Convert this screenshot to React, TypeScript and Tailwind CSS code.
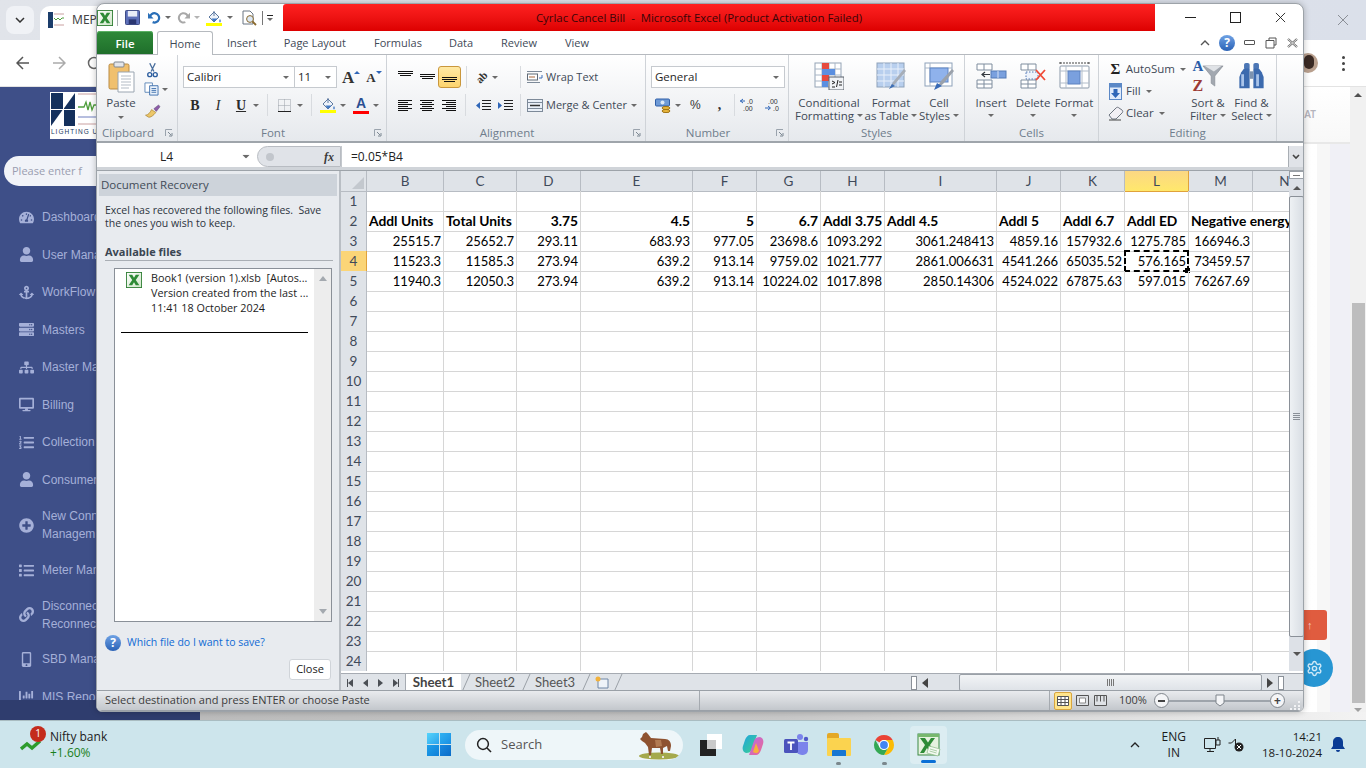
import type { ReactNode } from "react";
import clsx from "clsx";
import { Settings } from "lucide-react";
import {
  FaAnchor,
  FaChartBar,
  FaDesktop,
  FaLink,
  FaList,
  FaListOl,
  FaMobileAlt,
  FaPlusCircle,
  FaServer,
  FaSitemap,
  FaTachometerAlt,
  FaUser,
} from "react-icons/fa";

const calibri = "[font-family:Lato,sans-serif]";

const Caret = ({ className }: { className?: string }) => (
  <svg viewBox="0 0 6 3" className={clsx("h-[3px] w-[6px] shrink-0", className)}>
    <path d="M0 0h6L3 3z" fill="#6a6a6a" />
  </svg>
);

const ExcelLogo = ({ className }: { className?: string }) => (
  <svg viewBox="0 0 18 18" className={className}>
    <defs>
      <linearGradient id="xl" x1="0" y1="0" x2="1" y2="1">
        <stop offset="0" stopColor="#ffffff" />
        <stop offset="1" stopColor="#cfe6c8" />
      </linearGradient>
    </defs>
    <rect x="0.5" y="0.5" width="17" height="17" fill="url(#xl)" stroke="#2d7d32" />
    <path d="M3 3h4l2 3.4L11 3h4l-4 6 4 6h-4l-2-3.4L7 15H3l4-6z" fill="#2e8b36" />
  </svg>
);

const ExcelTaskIcon = () => (
  <svg viewBox="0 0 24 24" className="h-[24px] w-[24px]">
    <rect x="1" y="1" width="21" height="21" fill="#e6f2df" stroke="#3d8a45" />
    <rect x="1" y="1" width="21" height="3" fill="#78b86e" />
    <path d="M3 5h5l3 4.5L14 5h4l-5 7 5 8h-5l-3-5-3 5H3l5-8z" fill="#2e8b36" />
    <path d="M12 13l11 3-2 7-11-3z" fill="#f5faf2" stroke="#8dbb87" strokeWidth="0.7" />
    <path d="M13 16l7 2M12.5 18l7 2" stroke="#8dbb87" strokeWidth="0.7" />
  </svg>
);

const Launcher = () => (
  <svg viewBox="0 0 8 8" className="absolute right-[4px] top-[6px] h-[8px] w-[8px]">
    <path d="M0.5 7V0.5H7" fill="none" stroke="#9aa3ad" />
    <path d="M3 3l3 3M7 4v3H4" fill="none" stroke="#7d8893" />
  </svg>
);

function Group({ label, className, launcher, children }: { label: string; className: string; launcher?: boolean; children: ReactNode }) {
  return (
    <div className={clsx("flex h-full shrink-0 flex-col border-r border-[#cfd3d8]", className)}>
      <div className="min-h-0 flex-1">{children}</div>
      <div className={clsx("relative flex h-[18px] items-center justify-center pt-[2px] text-[11.5px] text-[#6f7d8c]", launcher && "pr-[18px]")}>
        {label}
        {launcher && <Launcher />}
      </div>
    </div>
  );
}

function BigButton({ className, icon, lines, caret }: { className: string; icon: ReactNode; lines: string[]; caret?: boolean }) {
  return (
    <div className={clsx("flex shrink-0 flex-col items-center pt-[7px] text-[11.5px] leading-[13px] text-[#3f4a57]", className)}>
      <div className="flex h-[28px] items-center justify-center">{icon}</div>
      <div className="mt-[6px] whitespace-nowrap">{lines[0]}</div>
      <div className="flex h-[13px] items-center gap-[3px] whitespace-nowrap">
        {lines[1]}
        {caret && <Caret />}
      </div>
    </div>
  );
}

const VSep = ({ className }: { className: string }) => <div className={clsx("h-[22px] w-px shrink-0 bg-[#d8dbdf]", className)} />;

function LinesIcon({ kind }: { kind: "left" | "center" | "right" | "top" | "mid" | "bottom" }) {
  if (kind === "top" || kind === "mid" || kind === "bottom") {
    const off = kind === "top" ? 0 : kind === "mid" ? 3 : 6;
    return (
      <svg viewBox="0 0 15 12" className="h-[12px] w-[15px]">
        <path d={`M0 ${off + 0.5}h15M0 ${off + 2.5}h15M2 ${off + 4.5}h11`} stroke="#111" fill="none" />
      </svg>
    );
  }
  const row = (w: number) => (kind === "left" ? 0 : kind === "center" ? (14 - w) / 2 : 14 - w);
  return (
    <svg viewBox="0 0 14 11" className="h-[11px] w-[14px]">
      {[14, 10, 14, 10, 14, 10].map((w, i) => (
        <rect key={i} x={row(w)} y={i * 2} width={w} height="1" fill="#111" />
      ))}
    </svg>
  );
}

const PasteIcon = () => (
  <svg viewBox="0 0 27 32" className="h-[32px] w-[27px]">
    <rect x="1" y="3" width="20" height="25" rx="1.5" fill="#f0c06e" stroke="#b98b44" />
    <rect x="6" y="1" width="10" height="5" rx="1" fill="#e4e6ea" stroke="#7f8791" />
    <path d="M10 11h16v20H10z" fill="#fff" stroke="#9aa5b1" />
    <path d="M13 15h10M13 18h10M13 21h10M13 24h10M13 27h8" stroke="#b3bbc5" />
  </svg>
);

const CutIcon = () => (
  <svg viewBox="0 0 12 16" className="h-[15px] w-[11px]">
    <path d="M3 0l4.5 9M9 0L4.5 9" stroke="#4a6f9e" strokeWidth="1.4" fill="none" />
    <circle cx="3" cy="12.5" r="2.2" fill="none" stroke="#2e5f9f" strokeWidth="1.5" />
    <circle cx="9" cy="12.5" r="2.2" fill="none" stroke="#2e5f9f" strokeWidth="1.5" />
  </svg>
);

const CopyIcon = () => (
  <svg viewBox="0 0 16 15" className="h-[14px] w-[15px]">
    <path d="M1 1h8v10H1z" fill="#fff" stroke="#5d86b8" />
    <path d="M6 4h9v10H6z" fill="#eaf2fb" stroke="#3e70ad" />
    <path d="M8 7h5M8 9h5M8 11h5" stroke="#3e70ad" />
  </svg>
);

const PainterIcon = () => (
  <svg viewBox="0 0 17 15" className="h-[14px] w-[17px]">
    <path d="M10 5l5-4 1.5 2-4 5z" fill="#8d5ca8" stroke="#55406e" strokeWidth="0.5" />
    <path d="M1 12c3 0 5-3 6.5-6L12 9c-2 3-6 6-8 5z" fill="#ecc76a" stroke="#a77f2e" strokeWidth="0.7" />
  </svg>
);

const FillIcon = () => (
  <svg viewBox="0 0 16 16" className="h-[16px] w-[16px]">
    <path d="M3 7l5-5 5 5-5 5z" fill="#eef3fa" stroke="#5c79a0" />
    <path d="M8 1V6" stroke="#5c79a0" />
    <path d="M5.5 8.5h6L8 12z" fill="#3f78c4" />
    <path d="M14 9c1 1.4 1 3 0 3.4-1-.4-1-2 0-3.4z" fill="#3f78c4" />
    <rect x="0" y="13" width="16" height="3" fill="#ffff00" />
  </svg>
);

const FontColorIcon = () => (
  <div className="flex h-[17px] w-[16px] flex-col items-center">
    <span className="text-[14px] font-bold leading-[13px] text-[#2b4f92] [font-family:'Liberation_Sans',sans-serif]">A</span>
    <span className="mt-[1px] h-[4px] w-[16px] bg-[#ff0000]" />
  </div>
);

const CondFormatIcon = () => (
  <svg viewBox="0 0 30 28" className="h-[28px] w-[30px]">
    <rect x="1" y="1" width="26" height="24" fill="#fff" stroke="#94a3b5" />
    <path d="M1 7h26M1 13h26M1 19h26M8 1v24M15 1v24M21 1v24" stroke="#a9b6c6" />
    <rect x="8" y="1" width="7" height="6" fill="#e64a3e" />
    <rect x="8" y="7" width="13" height="6" fill="#5b8fe0" />
    <rect x="8" y="13" width="7" height="6" fill="#e64a3e" />
    <rect x="8" y="19" width="6" height="6" fill="#5b8fe0" />
    <rect x="15" y="15" width="15" height="13" fill="#f1f3f6" stroke="#59606a" />
    <path d="M18 19l3 1.5-3 1.5M18 25h3M24 18l-1.5 7M25 20h3M25 23h3" stroke="#222" fill="none" />
  </svg>
);

const TableIcon = () => (
  <svg viewBox="0 0 31 28" className="h-[28px] w-[31px]">
    <rect x="1" y="1" width="27" height="24" fill="#b8cfee" stroke="#8ea2ba" />
    <path d="M1 7h27M1 13h27M1 19h27M8 1v24M15 1v24M22 1v24" stroke="#e9f0fa" />
    <path d="M13 27l4-7 11-13 2 2-11 13-6 5z" fill="#a7aeb8" />
    <path d="M13 27l3-5 3 2z" fill="#3e6fb5" />
  </svg>
);

const CellStylesIcon = () => (
  <svg viewBox="0 0 31 28" className="h-[28px] w-[31px]">
    <rect x="1" y="1" width="27" height="23" fill="#fff" stroke="#8ea2ba" />
    <path d="M1 6h27M6 1v23" stroke="#a9b6c6" />
    <rect x="6" y="6" width="18" height="14" fill="#8fb2ec" stroke="#5d84c4" />
    <path d="M12 27l5-8 11-12 2 2-11 13z" fill="#9aa1ab" />
    <path d="M10 28l3-7 5 3z" fill="#3769b5" />
  </svg>
);

const InsertIcon = () => (
  <svg viewBox="0 0 31 28" className="h-[28px] w-[31px]">
    <path d="M1 2h15v6H1zM1 18h15v8H1zM8 2v6M8 18v8M1 22h15" fill="#fff" stroke="#7f8d9e" />
    <rect x="15" y="9" width="15" height="7" fill="#7aa0de" stroke="#537ab6" />
    <path d="M22 9v7" stroke="#d5e2f5" />
    <path d="M6 12.5h8M9 10l-3 2.5 3 2.5" stroke="#33393f" fill="none" strokeWidth="1.2" />
  </svg>
);

const DeleteIcon = () => (
  <svg viewBox="0 0 27 28" className="h-[28px] w-[27px]">
    <path d="M1 2h15v6H1zM1 18h15v8H1zM8 2v6M8 18v8M1 22h15" fill="#fff" stroke="#7f8d9e" />
    <path d="M6 10h12v7H6z" fill="#eef3fb" stroke="#537ab6" strokeDasharray="1.5 1.5" />
    <path d="M16 8l9 10M25 8l-9 10" stroke="#ef4a36" strokeWidth="1.8" />
  </svg>
);

const FormatIcon = () => (
  <svg viewBox="0 0 31 30" className="h-[30px] w-[31px]">
    <path d="M1 1v2M30 1v2M1 2h29" stroke="#444" strokeDasharray="2 1" />
    <rect x="1" y="5" width="29" height="22" rx="1" fill="#fff" stroke="#8b99a9" />
    <path d="M1 10h29M1 22h29M7 5v22M23 5v22" stroke="#b2bdca" />
    <rect x="9" y="10" width="12" height="13" fill="#7aa0de" stroke="#5c82c0" />
  </svg>
);

const FillDownIcon = () => (
  <svg viewBox="0 0 13 17" className="h-[17px] w-[13px]">
    <rect x="0.5" y="0.5" width="12" height="16" fill="#dfeafa" stroke="#5b88c6" />
    <rect x="0.5" y="0.5" width="12" height="4" fill="#5b88c6" />
    <path d="M4.5 6h4v4h2.5l-4.5 5L2 10h2.5z" fill="#2f66b8" />
  </svg>
);

const EraserIcon = () => (
  <svg viewBox="0 0 16 15" className="h-[15px] w-[16px]">
    <path d="M1 9l7-7c1-1 2-1 3 0l3 2c1 1 1 2 0 3l-6 6H4z" fill="#f2f0f5" stroke="#6d7580" />
    <path d="M1 14h12" stroke="#444" />
  </svg>
);

const SortIcon = () => (
  <div className="relative flex h-[30px] w-[31px] items-center justify-center">
    <span className="absolute left-0 top-[-2px] text-[15px] font-bold leading-[15px] text-[#2b5da8] [font-family:'Liberation_Serif',serif]">A</span>
    <span className="absolute bottom-[-3px] left-0 text-[16px] font-bold leading-[16px] text-[#9c3a34] [font-family:'Liberation_Serif',serif]">Z</span>
    <svg viewBox="0 0 24 24" className="absolute right-0 top-[2px] h-[26px] w-[22px]">
      <path d="M1 1h22l-9 11v11l-4-3v-8z" fill="#a2a8b0" stroke="#7f858d" strokeWidth="0.6" />
      <path d="M3 1h18l-8 6z" fill="#dfe2e6" />
    </svg>
  </div>
);

const BinocularsIcon = () => (
  <svg viewBox="0 0 28 30" className="h-[28px] w-[27px]">
    <rect x="6" y="1" width="6" height="7" rx="2" fill="#4c77b6" />
    <rect x="16" y="1" width="6" height="7" rx="2" fill="#4c77b6" />
    <path d="M3 11l3-4h6v21H1V16z" fill="#3c6aae" />
    <path d="M25 11l-3-4h-6v21h11V16z" fill="#3c6aae" />
    <rect x="12" y="10" width="4" height="8" fill="#7d93b0" />
    <path d="M3 13h3v13H3zM19 13h3v13h-3z" fill="#a9c4ea" />
  </svg>
);

const HelpCircle = ({ className }: { className: string }) => (
  <div className={clsx("flex items-center justify-center rounded-full bg-gradient-to-b from-[#6fa2e4] to-[#2a62b6] font-bold text-white", className)}>?</div>
);

const columns = ["B", "C", "D", "E", "F", "G", "H", "I", "J", "K", "L", "M", "N"];
const rowData: Record<number, string[]> = {
  2: ["Addl Units", "Total Units", "3.75", "4.5", "5", "6.7", "Addl 3.75", "Addl 4.5", "Addl 5", "Addl 6.7", "Addl ED", "Negative energy"],
  3: ["25515.7", "25652.7", "293.11", "683.93", "977.05", "23698.6", "1093.292", "3061.248413", "4859.16", "157932.6", "1275.785", "166946.3"],
  4: ["11523.3", "11585.3", "273.94", "639.2", "913.14", "9759.02", "1021.777", "2861.006631", "4541.266", "65035.52", "576.165", "73459.57"],
  5: ["11940.3", "12050.3", "273.94", "639.2", "913.14", "10224.02", "1017.898", "2850.14306", "4524.022", "67875.63", "597.015", "76267.69"],
};
const rightHeaders = ["3.75", "4.5", "5", "6.7"];
const gridCols = "grid grid-cols-[26px_77px_73px_64px_112px_64px_64px_64px_112px_64px_64px_64px_64px_64px]";

function Sheet() {
  return (
    <div className={clsx("h-[500px] w-[948px] shrink-0 overflow-hidden bg-white text-[13px] text-black", calibri)}>
      <div className={clsx(gridCols, "h-[20px] bg-[#dfe3e8] text-[13.5px] text-[#3f4a5a]")}>
        <div className="relative border-b border-r border-[#b7bcc3]">
          <svg viewBox="0 0 12 12" className="absolute bottom-[2px] right-[2px] h-[12px] w-[12px]">
            <path d="M12 0v12H0z" fill="#c3c8ce" />
          </svg>
        </div>
        {columns.map((c) => (
          <div
            key={c}
            className={clsx(
              "flex items-center justify-center border-b border-r",
              c === "L" ? "border-[#e0a23b] bg-gradient-to-b from-[#fbd783] to-[#ffe86b]" : "border-[#b7bcc3]",
            )}
          >
            {c}
          </div>
        ))}
      </div>
      {Array.from({ length: 24 }, (_, i) => i + 1).map((r) => {
        const data = rowData[r];
        return (
          <div key={r} className={clsx(gridCols, "h-[20px]")}>
            <div
              className={clsx(
                "flex items-center justify-center border-b border-r text-[13.5px] text-[#3f4a5a]",
                r === 4 ? "border-[#e0a23b] bg-[#fbd577]" : "border-[#b7bcc3] bg-[#dfe3e8]",
              )}
            >
              {r}
            </div>
            {columns.map((c, ci) => {
              const v = data?.[ci];
              const header = r === 2;
              const right = !header || (v !== undefined && rightHeaders.includes(v));
              const spill = header && c === "M";
              return (
                <div
                  key={c}
                  className={clsx(
                    "relative flex items-center whitespace-nowrap border-b border-[#d6d6d6] px-[2px] leading-none",
                    right ? "justify-end" : "justify-start",
                    header && "text-[13.8px] font-bold",
                    !spill && "border-r",
                  )}
                >
                  {v}
                  {r === 4 && c === "L" && (
                    <span className="absolute inset-[-1px] border-2 border-dashed border-black">
                      <span className="absolute bottom-[-3px] right-[-3px] h-[5px] w-[5px] bg-black" />
                    </span>
                  )}
                </div>
              );
            })}
          </div>
        );
      })}
    </div>
  );
}

// labels read as far as the reference shows them, the Excel window covers the rest
const navItems: { icon: ReactNode; label: string[]; h: string }[] = [
  { icon: <FaTachometerAlt />, label: ["Dashboard"], h: "h-[37.5px]" },
  { icon: <FaUser />, label: ["User Mana"], h: "h-[37.5px]" },
  { icon: <FaAnchor />, label: ["WorkFlow"], h: "h-[37.5px]" },
  { icon: <FaServer />, label: ["Masters"], h: "h-[37.5px]" },
  { icon: <FaSitemap />, label: ["Master Ma"], h: "h-[37.5px]" },
  { icon: <FaDesktop />, label: ["Billing"], h: "h-[37.5px]" },
  { icon: <FaListOl />, label: ["Collection"], h: "h-[37.5px]" },
  { icon: <FaUser />, label: ["Consumer"], h: "h-[37.5px]" },
  { icon: <FaPlusCircle />, label: ["New Conn", "Managem"], h: "h-[53px]" },
  { icon: <FaList />, label: ["Meter Man"], h: "h-[37px]" },
  { icon: <FaLink />, label: ["Disconnec", "Reconnec"], h: "h-[52px]" },
  { icon: <FaMobileAlt />, label: ["SBD Mana"], h: "h-[37px]" },
  { icon: <FaChartBar />, label: ["MIS Repo"], h: "h-[38px]" },
];

const Sidebar = () => (
  <aside className="flex h-[633px] w-[200px] shrink-0 flex-col overflow-hidden bg-[#2f3d6e] [font-family:'Liberation_Sans',sans-serif]">
    <div className="flex h-[613px] flex-col overflow-hidden bg-[#3e4f88]">
      <div className="ml-[50px] mt-[5px] h-[47px] w-[100px] shrink-0 bg-white p-[1px]">
        <div className="flex h-[33px]">
          <div className="grid h-[33px] w-[24px] grid-cols-2 grid-rows-2 gap-px">
            <div className="bg-[#14305c]" />
            <div className="bg-[#14305c] [clip-path:polygon(100%_0,100%_100%,0_100%)]" />
            <div className="bg-[#14305c] [clip-path:polygon(0_0,100%_0,0_100%)]" />
            <div className="bg-[#14305c]" />
          </div>
          <svg viewBox="0 0 30 33" className="ml-[3px] h-[33px] w-[30px]">
            <path d="M0 1h30M0 31h30" stroke="#c9a0a0" />
            <path d="M0 14h6l2-5 2 8 2-8 2 8 2-5h14" stroke="#4f9e3c" fill="none" strokeWidth="1.3" />
            <path d="M0 24h30" stroke="#6f7fbf" />
          </svg>
        </div>
        <div className="mt-[1px] whitespace-nowrap text-[6.5px] leading-[9px] tracking-[1px] text-[#223a63]">LIGHTING U</div>
      </div>
      <div className="ml-[4px] mt-[17px] flex h-[30px] w-[130px] shrink-0 items-center rounded-l-[15px] bg-[#f1f3f8] pl-[8px] text-[11px] text-[#9a9db0] [font-family:'Open_Sans',sans-serif]">
        Please enter f
      </div>
      <nav className="mt-[12.5px] flex flex-col text-[12px] leading-[18px] text-[#a5b0d8]">
        {navItems.map((item, i) => (
          <div key={i} className={clsx("flex shrink-0 items-center pl-[19px]", item.h)}>
            <span className="flex w-[23px] shrink-0 text-[15px]">{item.icon}</span>
            <div className="whitespace-nowrap">
              {item.label.map((l) => (
                <div key={l}>{l}</div>
              ))}
            </div>
          </div>
        ))}
      </nav>
    </div>
  </aside>
);

const BrowserChrome = () => (
  <>
    <div className="flex h-[40px] items-end bg-gradient-to-r from-[#e1e4ea] to-[#dbe0ea] pl-[6px]">
      <div className="mb-[6px] flex h-[28px] w-[28px] items-center justify-center rounded-[8px] bg-[#f0f2f6]">
        <svg viewBox="0 0 10 6" className="h-[6px] w-[10px]">
          <path d="M1 1l4 4 4-4" stroke="#333" strokeWidth="1.5" fill="none" />
        </svg>
      </div>
      <div className="ml-[6px] flex h-[34px] w-[300px] items-center rounded-t-[10px] bg-white pb-[6px] pl-[8px] text-[12px] text-[#444]">
        <svg viewBox="0 0 16 16" className="h-[16px] w-[16px]">
          <rect x="0" y="0" width="5" height="16" fill="#1c3d6b" />
          <path d="M6 2h10M6 13h10" stroke="#c9a0a0" />
          <path d="M6 6l2 2 2-2 2 2 2-2h2" stroke="#4f9e3c" fill="none" />
        </svg>
        <span className="ml-[8px]">MEP</span>
      </div>
      <div className="flex-1" />
      <svg viewBox="0 0 12 12" className="mb-[14px] mr-[17px] h-[12px] w-[12px]">
        <path d="M1 1l10 10M11 1L1 11" stroke="#8b8f96" strokeWidth="1" />
      </svg>
    </div>
    <div className="flex h-[47px] items-center rounded-tr-[8px] border-b border-[#e3e3e3] bg-white pl-[16px]">
      <svg viewBox="0 0 14 14" className="h-[14px] w-[14px]">
        <path d="M13 7H1.5M7 1L1 7l6 6" stroke="#555" strokeWidth="1.5" fill="none" />
      </svg>
      <svg viewBox="0 0 14 14" className="ml-[22px] h-[14px] w-[14px]">
        <path d="M1 7h11.5M7 1l6 6-6 6" stroke="#aaa" strokeWidth="1.5" fill="none" />
      </svg>
      <svg viewBox="0 0 14 14" className="ml-[21px] h-[14px] w-[14px]">
        <circle cx="7" cy="7" r="5.5" stroke="#666" strokeWidth="1.5" fill="none" />
      </svg>
      <div className="flex-1" />
      <div className="mr-[24px] h-[20px] w-[20px] overflow-hidden rounded-full bg-[#b9a08e]">
        <div className="ml-[6px] mt-[2px] h-[14px] w-[10px] rounded-full bg-[#3a2a24]" />
      </div>
      <div className="mr-[21px] flex flex-col gap-[3px]">
        <span className="h-[3px] w-[3px] rounded-full bg-[#444]" />
        <span className="h-[3px] w-[3px] rounded-full bg-[#444]" />
        <span className="h-[3px] w-[3px] rounded-full bg-[#444]" />
      </div>
    </div>
  </>
);

const PageRight = () => (
  <div className="flex h-[633px] flex-1 flex-col">
    <div className="flex flex-1">
      <div className="flex-1">
        <div className="flex h-[57px] items-center justify-end border-b-2 border-[#e8e8e8] bg-gradient-to-b from-[#ffffff] to-[#f8f8f8] pr-[34px] text-[10px] font-semibold text-[#b4b4bd]">
          AT
        </div>
        <div className="flex h-[568px]">
          <div className="flex-1 bg-gradient-to-r from-[#e9e9e9] to-[#ffffff]" />
          <div className="h-full w-[13px] bg-[#f7f7f7]" />
          <div className="h-full w-[20px] bg-[#f0f0f6]" />
        </div>
      </div>
      <div className="flex w-[16px] flex-col items-center bg-[#f1f1f1]">
        <svg viewBox="0 0 8 4" className="mt-[6px] h-[4px] w-[8px]">
          <path d="M0 4h8L4 0z" fill="#505050" />
        </svg>
        <div className="mt-[206px] h-[400px] w-[13px] bg-[#bdbdbd]" />
        <svg viewBox="0 0 8 4" className="mt-[5px] h-[4px] w-[8px]">
          <path d="M0 0h8L4 4z" fill="#a0a0a0" />
        </svg>
      </div>
    </div>
    <div className="h-[8px] bg-gradient-to-r from-[#bcbcbc] via-[#c8c8c8] to-[#f3f3f3]" />
  </div>
);

const TitleBar = () => (
  <div className="flex h-[27px] shrink-0 items-stretch">
    <div className="flex w-[186px] shrink-0 items-center overflow-hidden">
      <ExcelLogo className="h-[16px] w-[16px] shrink-0" />
      <div className="ml-[4px] h-[16px] w-px shrink-0 bg-[#a9adb3]" />
      <svg viewBox="0 0 16 16" className="ml-[7px] h-[15px] w-[15px] shrink-0">
        <rect x="0.5" y="0.5" width="15" height="15" rx="1" fill="#5d6fb8" stroke="#34427f" />
        <rect x="3" y="1" width="10" height="6" fill="#e8ecf7" />
        <rect x="4" y="10" width="8" height="5" fill="#2a3671" />
      </svg>
      <svg viewBox="0 0 14 14" className="ml-[8px] h-[13px] w-[13px] shrink-0">
        <path d="M2 7a5 5 0 1 1 3 5" stroke="#2a6fb8" strokeWidth="2.4" fill="none" />
        <path d="M0 2v6h6z" fill="#2a6fb8" />
      </svg>
      <Caret className="ml-[4px]" />
      <svg viewBox="0 0 14 14" className="ml-[6px] h-[13px] w-[13px] shrink-0">
        <path d="M12 7a5 5 0 1 0-3 5" stroke="#a8a8a8" strokeWidth="2.2" fill="none" />
        <path d="M14 2v6H8z" fill="#a8a8a8" />
      </svg>
      <Caret className="ml-[4px] opacity-50" />
      <div className="ml-[6px] shrink-0"><FillIcon /></div>
      <Caret className="ml-[5px]" />
      <svg viewBox="0 0 16 16" className="ml-[8px] h-[16px] w-[16px] shrink-0">
        <path d="M2 1h7l3 3v10H2z" fill="#fff" stroke="#6b7684" />
        <circle cx="9" cy="9" r="3.4" fill="#dbe8f7" stroke="#8a6a2e" />
        <path d="M11.5 11.5L15 15" stroke="#8a6a2e" strokeWidth="1.8" />
      </svg>
      <div className="ml-[5px] h-[14px] w-px shrink-0 bg-[#777]" />
      <div className="ml-[4px] flex shrink-0 flex-col items-center gap-[2px]">
        <span className="h-px w-[6px] bg-[#222]" />
        <Caret />
      </div>
    </div>
    <div className="flex w-[872px] shrink-0 items-center justify-center rounded-tl-[3px] bg-gradient-to-b from-[#ff2020] to-[#dd0000] pr-[40px] text-[11.4px] text-[#3a0508]">
      Cyrlac Cancel Bill&nbsp; -&nbsp; Microsoft Excel (Product Activation Failed)
    </div>
    <div className="flex flex-1 items-center">
      <span className="ml-[30px] h-px w-[11px] bg-[#222]" />
      <span className="ml-[34px] h-[11px] w-[11px] border border-[#222]" />
      <svg viewBox="0 0 12 12" className="ml-[34px] h-[11px] w-[11px]">
        <path d="M1 1l10 10M11 1L1 11" stroke="#222" strokeWidth="1" />
      </svg>
    </div>
  </div>
);

const tabs = [
  { label: "Insert", cls: "ml-[14px]" },
  { label: "Page Layout", cls: "ml-[27px]" },
  { label: "Formulas", cls: "ml-[28px]" },
  { label: "Data", cls: "ml-[27px]" },
  { label: "Review", cls: "ml-[28px]" },
  { label: "View", cls: "ml-[28px]" },
];

const TabRow = () => (
  <div className="flex h-[24px] shrink-0 items-end border-b border-[#b6babf] bg-white text-[11px] text-[#3f4a57]">
    <div className="flex h-[23px] w-[56px] items-center justify-center rounded-t-[3px] bg-gradient-to-b from-[#2f8a39] to-[#1f6f2b] pt-[2px] text-[11.5px] font-semibold text-white shadow-[inset_0_1px_0_#5bb164]">
      File
    </div>
    <div className="relative top-px ml-[4px] flex h-[24px] w-[56px] items-center justify-center rounded-t-[3px] border border-b-0 border-[#b6babf] bg-white pt-[2px]">
      Home
    </div>
    {tabs.map((t) => (
      <div key={t.label} className={clsx("flex h-[23px] items-center whitespace-nowrap pt-[2px]", t.cls)}>
        {t.label}
      </div>
    ))}
    <div className="flex-1" />
    <div className="flex h-[23px] items-center pr-[5px]">
      <svg viewBox="0 0 10 7" className="h-[7px] w-[10px]">
        <path d="M1 6l4-4 4 4" stroke="#555" strokeWidth="1.4" fill="none" />
      </svg>
      <HelpCircle className="ml-[9px] h-[16px] w-[16px] text-[12px]" />
      <span className="ml-[9px] h-[5px] w-[11px] rounded-[1px] border border-[#555]" />
      <svg viewBox="0 0 12 12" className="ml-[10px] h-[12px] w-[12px]">
        <path d="M4 3V1h7v7H9M1 3.5h8v7.5H1z" fill="#fff" stroke="#555" />
      </svg>
      <svg viewBox="0 0 11 10" className="ml-[10px] h-[10px] w-[11px]">
        <path d="M1 1l9 8M10 1L1 9" stroke="#666" strokeWidth="2.2" />
        <path d="M1 1l9 8M10 1L1 9" stroke="#fff" strokeWidth="0.8" />
      </svg>
    </div>
  </div>
);

const Combo = ({ className, label }: { className: string; label: string }) => (
  <div className={clsx("flex h-[22px] shrink-0 items-center justify-between border border-[#c6cacf] bg-white pl-[3px] pr-[5px] text-[11.5px] text-[#1f1f1f]", className)}>
    {label}
    <Caret />
  </div>
);

const Ribbon = () => (
  <div className="flex h-[88px] shrink-0 border-b-2 border-[#9fa5ab] bg-gradient-to-b from-[#ffffff] to-[#e6e9ed]">
    <Group label="Clipboard" className="w-[81px]" launcher>
      <div className="flex pl-[7px]">
        <div className="flex w-[34px] flex-col items-center pt-[6px] text-[11.5px] leading-[13px] text-[#3f4a57]">
          <PasteIcon />
          <div className="mt-[3px]">Paste</div>
          <Caret className="mt-[7px]" />
        </div>
        <div className="ml-[6px] flex flex-col pt-[1px]">
          <div className="flex h-[22px] items-end pl-[3px]"><CutIcon /></div>
          <div className="flex h-[22px] items-center gap-[3px]"><CopyIcon /><Caret /></div>
          <div className="flex h-[22px] items-center"><PainterIcon /></div>
        </div>
      </div>
    </Group>

    <Group label="Font" className="w-[209px]" launcher>
      <div className="flex items-center pl-[5px] pt-[11px]">
        <Combo className="w-[112px]" label="Calibri" />
        <Combo className="-ml-px w-[43px]" label="11" />
        <span className="ml-[5px] text-[17px] font-bold leading-none text-[#333] [font-family:'Liberation_Serif',serif]">A</span>
        <svg viewBox="0 0 6 3" className="mb-[9px] h-[3px] w-[6px]"><path d="M0 3h6L3 0z" fill="#2f66b8" /></svg>
        <span className="ml-[6px] text-[13px] font-bold leading-none text-[#333] [font-family:'Liberation_Serif',serif]">A</span>
        <svg viewBox="0 0 6 3" className="mb-[9px] h-[3px] w-[6px]"><path d="M0 0h6L3 3z" fill="#2f66b8" /></svg>
      </div>
      <div className="mt-[6px] flex h-[22px] items-center pl-[11px] text-[14px] text-[#2a2a2a] [font-family:'Liberation_Serif',serif]">
        <span className="w-[12px] text-center font-bold">B</span>
        <span className="ml-[11px] w-[12px] text-center italic">I</span>
        <span className="ml-[11px] w-[12px] text-center font-bold underline">U</span>
        <Caret className="ml-[6px]" />
        <VSep className="ml-[8px]" />
        <svg viewBox="0 0 13 13" className="ml-[10px] h-[13px] w-[13px] shrink-0">
          <path d="M0.5 0.5h12v12h-12zM6.5 0.5v12M0.5 6.5h12" fill="none" stroke="#9aa0a8" strokeDasharray="1 1" />
          <path d="M0 12.5h13" stroke="#222" />
        </svg>
        <Caret className="ml-[6px]" />
        <VSep className="ml-[8px]" />
        <div className="ml-[8px] shrink-0"><FillIcon /></div>
        <Caret className="ml-[4px]" />
        <div className="ml-[7px] shrink-0"><FontColorIcon /></div>
        <Caret className="ml-[4px]" />
      </div>
    </Group>

    <Group label="Alignment" className="w-[259px]" launcher>
      <div className="mt-[11px] flex h-[22px] items-center pl-[7px]">
        <div className="flex w-[22px] justify-center"><LinesIcon kind="top" /></div>
        <div className="flex w-[22px] justify-center"><LinesIcon kind="mid" /></div>
        <div className="flex h-[22px] w-[23px] items-center justify-center rounded-[3px] border border-[#c9973c] bg-gradient-to-b from-[#ffe9a3] to-[#fdd46e]"><LinesIcon kind="bottom" /></div>
        <VSep className="ml-[5px]" />
        <div className="ml-[7px] flex h-[14px] w-[16px] shrink-0 items-center justify-center">
          <span className="-rotate-45 text-[11px] font-bold leading-none text-[#333] [font-family:'Liberation_Serif',serif]">ab</span>
        </div>
        <Caret className="ml-[2px]" />
        <VSep className="ml-[22px]" />
        <svg viewBox="0 0 16 14" className="ml-[6px] h-[14px] w-[16px] shrink-0">
          <path d="M0 1.5h15M0 12.5h13" stroke="#7d8a99" />
          <rect x="0.5" y="4" width="10" height="6" fill="#fff" stroke="#5f6a77" />
          <path d="M2 7h6" stroke="#a8663b" />
          <path d="M15 5v3h-3" stroke="#3c6fb8" fill="none" />
        </svg>
        <span className="ml-[3px] whitespace-nowrap text-[11px] text-[#3f4a57]">Wrap Text</span>
      </div>
      <div className="mt-[6px] flex h-[22px] items-center pl-[7px]">
        <div className="flex w-[22px] justify-center"><LinesIcon kind="left" /></div>
        <div className="flex w-[22px] justify-center"><LinesIcon kind="center" /></div>
        <div className="flex w-[22px] justify-center"><LinesIcon kind="right" /></div>
        <VSep className="ml-[5px]" />
        <svg viewBox="0 0 17 13" className="ml-[9px] h-[13px] w-[17px] shrink-0">
          <path d="M7 1.5h9M7 4.5h9M7 7.5h9M7 10.5h9" stroke="#222" />
          <path d="M5 3L1 6.5 5 10z" fill="#2f66b8" />
        </svg>
        <svg viewBox="0 0 17 13" className="ml-[5px] h-[13px] w-[17px] shrink-0">
          <path d="M7 1.5h9M7 4.5h9M7 7.5h9M7 10.5h9" stroke="#222" />
          <path d="M1 3l4 3.5L1 10z" fill="#2f66b8" />
        </svg>
        <VSep className="ml-[6px]" />
        <svg viewBox="0 0 16 13" className="ml-[6px] h-[13px] w-[16px] shrink-0">
          <rect x="0.5" y="0.5" width="15" height="12" fill="#eaf0f8" stroke="#7d8a99" />
          <path d="M0 3.5h16M0 9.5h16" stroke="#7d8a99" />
          <path d="M3 6.5h10" stroke="#333" strokeWidth="1.4" />
        </svg>
        <span className="ml-[3px] whitespace-nowrap text-[11px] text-[#3f4a57]">Merge &amp; Center</span>
        <Caret className="ml-[4px]" />
      </div>
    </Group>

    <Group label="Number" className="w-[143px]" launcher>
      <div className="pl-[5px] pt-[11px]">
        <Combo className="w-[134px]" label="General" />
      </div>
      <div className="mt-[6px] flex h-[22px] items-center pl-[9px] text-[#333]">
        <svg viewBox="0 0 16 15" className="h-[15px] w-[16px]">
          <rect x="0.5" y="1" width="14" height="7" rx="1" fill="#6e9ad6" stroke="#2f5fa8" />
          <circle cx="7.5" cy="4.5" r="2" fill="#dbe8f7" />
          <ellipse cx="11" cy="10" rx="4" ry="1.6" fill="#e7b53c" stroke="#9e7316" />
          <ellipse cx="11" cy="13" rx="4" ry="1.6" fill="#e7b53c" stroke="#9e7316" />
        </svg>
        <Caret className="ml-[4px]" />
        <span className="ml-[9px] text-[12px] [font-family:'Liberation_Sans',sans-serif]">%</span>
        <span className="ml-[17px] w-[4px] text-[14px] font-bold leading-[10px] [font-family:'Liberation_Serif',serif]">,</span>
        <VSep className="ml-[12px]" />
        <svg viewBox="0 0 16 14" className="ml-[5px] h-[14px] w-[16px]">
          <path d="M0 3h5M3 1L0.5 3 3 5" stroke="#2f66b8" fill="none" />
          <text x="7" y="6" fontSize="7" fill="#333" fontFamily="Liberation Sans">.0</text>
          <text x="3" y="13" fontSize="7" fill="#333" fontFamily="Liberation Sans">.00</text>
        </svg>
        <svg viewBox="0 0 16 14" className="ml-[9px] h-[14px] w-[16px]">
          <path d="M0 10h5M3 8l2.5 2L3 12" stroke="#2f66b8" fill="none" />
          <text x="3" y="6" fontSize="7" fill="#333" fontFamily="Liberation Sans">.00</text>
          <text x="8" y="13" fontSize="7" fill="#333" fontFamily="Liberation Sans">.0</text>
        </svg>
      </div>
    </Group>

    <Group label="Styles" className="w-[176px]">
      <div className="flex pl-[8px]">
        <BigButton className="w-[64px]" icon={<CondFormatIcon />} lines={["Conditional", "Formatting"]} caret />
        <BigButton className="w-[60px]" icon={<TableIcon />} lines={["Format", "as Table"]} caret />
        <BigButton className="w-[36px]" icon={<CellStylesIcon />} lines={["Cell", "Styles"]} caret />
      </div>
    </Group>

    <Group label="Cells" className="w-[134px]">
      <div className="flex pl-[5px]">
        <BigButton className="w-[42px]" icon={<InsertIcon />} lines={["Insert", ""]} caret />
        <BigButton className="w-[42px]" icon={<DeleteIcon />} lines={["Delete", ""]} caret />
        <BigButton className="w-[40px]" icon={<FormatIcon />} lines={["Format", ""]} caret />
      </div>
    </Group>

    <Group label="Editing" className="w-[178px]">
      <div className="flex pl-[6px]">
        <div className="flex w-[81px] flex-col pt-[3px] text-[11.5px] text-[#3f4a57]">
          <div className="flex h-[22px] items-center">
            <span className="flex w-[21px] justify-center text-[15px] font-bold leading-none text-[#222] [font-family:'Liberation_Serif',serif]">Σ</span>
            <span>AutoSum</span>
            <Caret className="ml-[5px]" />
          </div>
          <div className="flex h-[22px] items-center">
            <span className="flex w-[21px] justify-center"><FillDownIcon /></span>
            <span>Fill</span>
            <Caret className="ml-[5px]" />
          </div>
          <div className="flex h-[22px] items-center">
            <span className="flex w-[21px] justify-center"><EraserIcon /></span>
            <span>Clear</span>
            <Caret className="ml-[5px]" />
          </div>
        </div>
        <BigButton className="w-[44px]" icon={<SortIcon />} lines={["Sort &", "Filter"]} caret />
        <BigButton className="w-[43px]" icon={<BinocularsIcon />} lines={["Find &", "Select"]} caret />
      </div>
    </Group>
  </div>
);

const FormulaBar = () => (
  <div className="mt-[3px] flex h-[21px] shrink-0 bg-white text-[12px] text-[#222] [font-family:'Open_Sans',sans-serif]">
    <div className="flex w-[160px] shrink-0 items-center pl-[63px]">
      L4
      <Caret className="ml-[70px] scale-125" />
    </div>
    <div className="flex w-[84px] shrink-0 items-center justify-between rounded-l-full border border-[#b8bcc2] bg-[#e0e3e8] pl-[8px] pr-[6px]">
      <span className="h-[8px] w-[8px] rounded-full bg-[#c2c6cc]" />
      <span className="text-[12px] font-bold italic text-[#3a3a3a] [font-family:'Liberation_Serif',serif]">fx</span>
    </div>
    <div className="flex flex-1 items-center border-l border-[#c4c8cd] pl-[9px]">=0.05*B4</div>
    <div className="flex w-[15px] items-center justify-center border-l border-[#a9aeb4] bg-[#e0e3e8]">
      <svg viewBox="0 0 8 6" className="h-[6px] w-[8px]">
        <path d="M1 1l3 3 3-3" stroke="#444" strokeWidth="1.6" fill="none" />
      </svg>
    </div>
  </div>
);

const TaskPane = () => (
  <div className="flex h-[520px] w-[244px] shrink-0 flex-col border-r-2 border-[#b9bec4] bg-[#e8ebef] text-[10.5px] text-[#2c3440]">
    <div className="mx-[2px] mt-[3px] flex h-[22px] shrink-0 items-center bg-[#cdd3da] pl-[2px] text-[11.5px] text-[#424c58]">Document Recovery</div>
    <div className="ml-[8px] mt-[8px] leading-[13px]">
      <div>Excel has recovered the following files.&nbsp; Save</div>
      <div>the ones you wish to keep.</div>
    </div>
    <div className="ml-[8px] mr-[6px] mt-[15px] h-[16px] border-b border-[#a9aeb4] text-[11px] font-bold leading-[13px] text-[#3a4552]">Available files</div>
    <div className="ml-[17px] mt-[7px] flex h-[354px] w-[218px] shrink-0 border border-[#8a9098] bg-white">
      <div className="flex-1 pl-[11px] pt-[1px]">
        <div className="flex">
          <ExcelLogo className="mt-[2px] h-[16px] w-[16px] shrink-0" />
          <div className="ml-[9px] text-[10.8px] leading-[15px] text-[#1c1c1c]">
            <div className="whitespace-nowrap">Book1 (version 1).xlsb&nbsp; [Autos...</div>
            <div className="whitespace-nowrap">Version created from the last ...</div>
            <div className="whitespace-nowrap">11:41 18 October 2024</div>
          </div>
        </div>
        <div className="-ml-[5px] mt-[17px] h-px w-[187px] bg-black" />
      </div>
      <div className="flex w-[17px] shrink-0 flex-col items-center justify-between bg-[#ededed] py-[7px]">
        <svg viewBox="0 0 8 5" className="h-[5px] w-[8px]"><path d="M0 5h8L4 0z" fill="#a4a9af" /></svg>
        <svg viewBox="0 0 8 5" className="h-[5px] w-[8px]"><path d="M0 0h8L4 5z" fill="#a4a9af" /></svg>
      </div>
    </div>
    <div className="ml-[8px] mt-[13px] flex items-center">
      <HelpCircle className="h-[16px] w-[16px] text-[12px]" />
      <span className="ml-[6px] text-[#0f6ad4]">Which file do I want to save?</span>
    </div>
    <div className="mr-[8px] mt-[8px] flex justify-end">
      <div className="flex h-[21px] w-[42px] items-center justify-center rounded-[3px] border border-[#d0d4d9] bg-white text-[11px] text-[#222]">Close</div>
    </div>
  </div>
);

const VScroll = () => (
  <div className="flex h-[500px] w-[15px] shrink-0 flex-col bg-[#dde1e7]">
    <div className="flex h-[8px] shrink-0 items-center justify-center border border-[#9aa0a7] bg-white">
      <span className="h-px w-[7px] bg-[#777]" />
    </div>
    <div className="flex h-[17px] shrink-0 items-center justify-center">
      <svg viewBox="0 0 8 4" className="h-[4px] w-[8px]"><path d="M0 4h8L4 0z" fill="#555" /></svg>
    </div>
    <div className="flex h-[441px] shrink-0 flex-col items-center justify-center gap-[1px] rounded-[2px] border border-[#8a9098] bg-gradient-to-r from-[#eef1f4] to-[#d9dee4]">
      <span className="h-px w-[7px] bg-[#8a9098]" />
      <span className="h-px w-[7px] bg-[#8a9098]" />
      <span className="h-px w-[7px] bg-[#8a9098]" />
      <span className="h-px w-[7px] bg-[#8a9098]" />
    </div>
    <div className="flex flex-1 items-center justify-center">
      <svg viewBox="0 0 8 4" className="h-[4px] w-[8px]"><path d="M0 0h8L4 4z" fill="#555" /></svg>
    </div>
  </div>
);

const Slant = ({ className }: { className?: string }) => (
  <svg viewBox="0 0 10 18" className={clsx("h-[18px] w-[10px] shrink-0", className)}>
    <path d="M1 18L9 0" stroke="#9aa0a7" />
  </svg>
);

const SheetTabs = () => (
  <div className="mt-[2px] flex h-[18px] items-stretch border-t border-[#a6abb2] bg-[#dfe3e8] text-[#555]">
    <div className="flex w-[64px] shrink-0 items-center gap-[8px] pl-[6px]">
      {["M6 0v8L1 4zM0 0h1v8H0z", "M6 0v8L1 4z", "M1 0v8l5-4z", "M1 0v8l5-4zM6 0h1v8H6z"].map((d) => (
        <svg key={d} viewBox="0 0 7 8" className="h-[8px] w-[7px]"><path d={d} fill="#4b4f55" /></svg>
      ))}
    </div>
    <div className={clsx("flex h-[17px] w-[56px] shrink-0 items-center justify-center border-l border-[#a6abb2] bg-white text-[13.3px] font-bold leading-none text-[#444]", calibri)}>Sheet1</div>
    <div className={clsx("flex w-[60px] shrink-0 items-center text-[13px] leading-none", calibri)}>
      <Slant />
      <span className="ml-[4px]">Sheet2</span>
    </div>
    <div className={clsx("flex w-[60px] shrink-0 items-center text-[13px] leading-none", calibri)}>
      <Slant />
      <span className="ml-[4px]">Sheet3</span>
    </div>
    <div className="flex w-[44px] shrink-0 items-center">
      <Slant />
      <svg viewBox="0 0 14 13" className="ml-[4px] h-[13px] w-[14px]">
        <path d="M3 3h10v9H3z" fill="#eef3f9" stroke="#6e86a5" />
        <circle cx="3" cy="3" r="2.5" fill="#f2b13a" />
      </svg>
      <Slant className="ml-[4px]" />
    </div>
    <div className="flex-1" />
    <div className="flex w-[392px] shrink-0 items-center">
      <span className="h-[14px] w-[6px] border border-[#8a9098] bg-white" />
      <svg viewBox="0 0 6 10" className="ml-[5px] h-[10px] w-[6px]"><path d="M6 0v10L0 5z" fill="#444" /></svg>
      <div className="ml-[31px] h-[17px] w-[303px] rounded-[2px] border border-[#9aa0a7] bg-gradient-to-b from-[#f2f4f6] to-[#dfe3e8]">
        <div className="flex h-full items-center justify-center gap-[1px]">
          <span className="h-[7px] w-px bg-[#777]" />
          <span className="h-[7px] w-px bg-[#777]" />
          <span className="h-[7px] w-px bg-[#777]" />
          <span className="h-[7px] w-px bg-[#777]" />
        </div>
      </div>
      <svg viewBox="0 0 6 10" className="ml-[5px] h-[10px] w-[6px]"><path d="M0 0v10l6-5z" fill="#444" /></svg>
      <span className="ml-[5px] h-[14px] w-[6px] border border-[#8a9098] bg-white" />
    </div>
  </div>
);

const StatusBar = () => (
  <div className="flex h-[21px] shrink-0 items-center border-b border-t border-[#9aa0a7] bg-gradient-to-b from-[#e9ebee] to-[#c3c7cc] pr-[3px] text-[11px] text-[#3c3c3c]">
    <span className="ml-[8px] w-[594px] shrink-0 whitespace-nowrap">Select destination and press ENTER or choose Paste</span>
    <span className="h-[19px] w-px bg-[#a5aab0]" />
    <div className="flex-1" />
    <span className="h-[19px] w-px bg-[#a5aab0]" />
    <div className="ml-[4px] flex h-[18px] w-[18px] items-center justify-center rounded-[2px] border border-[#d9a63f] bg-[#ffe58c]">
      <svg viewBox="0 0 12 10" className="h-[10px] w-[12px]"><path d="M0.5 0.5h11v9h-11zM0.5 3.5h11M0.5 6.5h11M4 0.5v9M8 0.5v9" fill="#fff" stroke="#555" /></svg>
    </div>
    <svg viewBox="0 0 13 11" className="ml-[4px] h-[11px] w-[13px]"><path d="M0.5 0.5h12v10h-12z" fill="#dfe2e6" stroke="#555" /><path d="M3.5 3h6v5h-6z" fill="#fff" stroke="#888" /></svg>
    <svg viewBox="0 0 13 11" className="ml-[5px] h-[11px] w-[13px]"><path d="M0.5 0.5h12v10h-12z" fill="#dfe2e6" stroke="#555" /><path d="M3 0.5v6M6.5 0.5v6M10 0.5v6" stroke="#555" /></svg>
    <span className="ml-[12px] w-[27px] text-[11px]">100%</span>
    <div className="ml-[8px] flex h-[15px] w-[15px] items-center justify-center rounded-full border border-[#7f858c] bg-[#f4f5f7]"><span className="h-[2px] w-[7px] bg-[#444]" /></div>
    <div className="relative h-[2px] w-[101px] bg-[#9ea4ab]">
      <svg viewBox="0 0 10 13" className="absolute left-[46px] top-[-6px] h-[13px] w-[10px]"><path d="M1 1h8v8l-4 3-4-3z" fill="#f4f5f7" stroke="#7f858c" /></svg>
    </div>
    <div className="flex h-[15px] w-[15px] items-center justify-center rounded-full border border-[#7f858c] bg-[#f4f5f7] text-[12px] font-bold leading-none text-[#444]">+</div>
    <svg viewBox="0 0 10 10" className="ml-[5px] mt-[8px] h-[10px] w-[10px]">
      <path d="M8 1h2v2H8zM4 5h2v2H4zM8 5h2v2H8zM0 8h2v2H0zM4 8h2v2H4zM8 8h2v2H8z" fill="#f2f3f5" />
    </svg>
  </div>
);

const ExcelWindow = () => (
  <div className="absolute left-[96px] top-[3px] z-10 flex h-[709px] w-[1208px] flex-col overflow-hidden rounded-b-[6px] rounded-t-[8px] border border-[#9da3a9] bg-white text-[11.5px] shadow-[0_0_6px_rgba(0,0,0,0.25)] [font-family:'Open_Sans',sans-serif]">
    <TitleBar />
    <TabRow />
    <Ribbon />
    <FormulaBar />
    <div className="h-[4px] shrink-0 border-b border-[#9da3a9] bg-[#d0d4d9]" />
    <div className="flex min-h-0 flex-1">
      <TaskPane />
      <div className="flex min-w-0 flex-1 flex-col">
        <div className="flex">
          <Sheet />
          <VScroll />
        </div>
        <SheetTabs />
      </div>
    </div>
    <StatusBar />
  </div>
);

const Cow = () => (
  <svg viewBox="0 0 46 32" className="h-[32px] w-[46px]">
    <ellipse cx="24" cy="28" rx="20" ry="3.5" fill="#a4a94c" />
    <path d="M8 6l3-2 2 2 3 4 14 1c4 0 6 3 6 7l-1 5h-2l-1-5-4 2v6h-2l-1-6h-8l-1 7h-2l-1-8-3-4-3-2-2-2 2-2z" fill="#8e5230" />
    <path d="M20 12l6 0 1 6-6 1z" fill="#b27a52" />
    <path d="M14 28h2v2h-2zM27 28h2v2h-2z" fill="#e8e4dc" />
  </svg>
);

const Taskbar = () => (
  <div className="flex h-[48px] shrink-0 items-center border-t border-[#a9bcc1] bg-[#cde5ec] text-[#1b1b1b] [font-family:'Open_Sans',sans-serif]">
    <div className="relative ml-[20px] w-[24px]">
      <svg viewBox="0 0 22 12" className="h-[12px] w-[22px]">
        <path d="M1 10l6-5 5 4 8-7" stroke="#2d9b2d" strokeWidth="3.4" fill="none" />
      </svg>
      <span className="absolute left-[10px] top-[-13px] flex h-[16px] w-[16px] items-center justify-center rounded-full bg-[#c42b1c] text-[10px] text-white">1</span>
    </div>
    <div className="ml-[6px] w-[80px] shrink-0 text-[12px] leading-[16px]">
      <div>Nifty bank</div>
      <div className="text-[#1a7f1a]">+1.60%</div>
    </div>
    <div className="ml-[297px] grid h-[23px] w-[24px] shrink-0 grid-cols-2 gap-[1px]">
      <div className="bg-gradient-to-br from-[#55d4fb] to-[#2ba3ec]" />
      <div className="bg-gradient-to-br from-[#2fb2f2] to-[#1a8fe3]" />
      <div className="bg-gradient-to-br from-[#1fa0ea] to-[#0f7fd8]" />
      <div className="bg-gradient-to-br from-[#1889e0] to-[#0a6cc8]" />
    </div>
    <div className="relative ml-[14px] flex h-[30px] w-[218px] shrink-0 items-center overflow-hidden rounded-full bg-[#eef6f9] pl-[11px] text-[13px] text-[#555]">
      <svg viewBox="0 0 16 16" className="h-[16px] w-[16px]">
        <circle cx="7" cy="7" r="5.4" fill="none" stroke="#222" strokeWidth="1.5" />
        <path d="M11 11l4 4" stroke="#222" strokeWidth="1.6" />
      </svg>
      <span className="ml-[9px]">Search</span>
      <div className="absolute bottom-0 right-[2px]"><Cow /></div>
    </div>
    <svg viewBox="0 0 24 24" className="ml-[16px] h-[24px] w-[24px]">
      <rect x="8" y="1" width="15" height="15" fill="#fff" />
      <rect x="1" y="7" width="16" height="16" fill="#222" />
      <rect x="8" y="7" width="9" height="9" fill="#c9c9c9" />
    </svg>
    <svg viewBox="0 0 24 24" className="ml-[18px] h-[24px] w-[24px]">
      <defs>
        <linearGradient id="cp1" x1="0" y1="0" x2="1" y2="1"><stop offset="0" stopColor="#1fa4e0" /><stop offset="1" stopColor="#3ed38a" /></linearGradient>
        <linearGradient id="cp2" x1="0" y1="0" x2="1" y2="1"><stop offset="0" stopColor="#b56ae8" /><stop offset="1" stopColor="#f06a8c" /></linearGradient>
      </defs>
      <path d="M9 2h7l-5 14c-1 3-3 4-6 4-3-1-4-4-3-7l2-6c1-3 3-5 5-5z" fill="url(#cp1)" />
      <path d="M15 22H8l5-14c1-3 3-4 6-4 3 1 4 4 3 7l-2 6c-1 3-3 5-5 5z" fill="url(#cp2)" />
      <path d="M12 19l3-9 3 8c-1 2-3 3-6 1z" fill="#f7b13a" />
    </svg>
    <svg viewBox="0 0 26 24" className="ml-[18px] h-[24px] w-[26px]">
      <circle cx="17" cy="4" r="3" fill="#7b83eb" />
      <circle cx="23" cy="6" r="2.2" fill="#5059c9" />
      <path d="M13 9h12v8a5 5 0 0 1-5 5h-1a6 6 0 0 1-6-6z" fill="#7b83eb" />
      <rect x="1" y="6" width="14" height="14" rx="1.5" fill="#4b53bc" />
      <path d="M4.5 9.5h7M8 9.5v7.5" stroke="#fff" strokeWidth="1.8" />
    </svg>
    <div className="relative ml-[18px] flex h-[24px] w-[24px] flex-col">
      <div className="h-[6px] w-[12px] rounded-t-[2px] bg-[#e4a826]" />
      <div className="relative -mt-px flex h-[18px] flex-col justify-end rounded-[1px] bg-[#fbd34f]">
        <div className="mx-auto h-[6px] w-[14px] rounded-t-[1px] bg-[#1877d2]" />
      </div>
      <span className="absolute bottom-[-8px] left-[9px] h-[3px] w-[5px] rounded-full bg-[#7b878c]" />
    </div>
    <div className="relative ml-[21px] h-[24px] w-[24px]">
      <svg viewBox="0 0 24 24" className="h-[24px] w-[24px]">
        <path d="M12 2a10 10 0 0 1 8.66 5H12a5 5 0 0 0-4.33 2.5L3.34 7A10 10 0 0 1 12 2z" fill="#ea4335" />
        <path d="M20.66 7A10 10 0 0 1 12 22l4.33-7.5a5 5 0 0 0 0-5A5 5 0 0 0 12 7z" fill="#fbbc05" />
        <path d="M12 22A10 10 0 0 1 3.34 7l4.33 7.5A5 5 0 0 0 12 17a5 5 0 0 0 4.33-2.5z" fill="#34a853" />
        <circle cx="12" cy="12" r="5" fill="#fff" />
        <circle cx="12" cy="12" r="3.9" fill="#4285f4" />
      </svg>
      <span className="absolute bottom-[-8px] left-[10px] h-[3px] w-[5px] rounded-full bg-[#7b878c]" />
    </div>
    <div className="relative ml-[14px] flex h-[38px] w-[37px] items-center justify-center rounded-[4px] bg-[#dcedf2]">
      <ExcelTaskIcon />
      <span className="absolute bottom-[1px] left-[11px] h-[3px] w-[15px] rounded-full bg-[#0a6fd6]" />
    </div>
    <div className="flex-1" />
    <svg viewBox="0 0 10 6" className="mr-[22px] h-[6px] w-[10px]"><path d="M1 5l4-4 4 4" stroke="#222" strokeWidth="1.3" fill="none" /></svg>
    <div className="mr-[18px] flex flex-col items-center text-[12px] leading-[16px]">
      <span>ENG</span>
      <span>IN</span>
    </div>
    <svg viewBox="0 0 17 17" className="mr-[7px] h-[17px] w-[17px]">
      <path d="M0.5 2.5h11v10h-11zM3 15.5h7M6 12.5v3" fill="none" stroke="#222" />
      <path d="M12 4h4v5h-4zM14 1v3" fill="#cde5ec" stroke="#222" />
    </svg>
    <svg viewBox="0 0 16 14" className="mr-[18px] h-[14px] w-[16px]">
      <path d="M0.5 5h3l4-4v8" fill="none" stroke="#222" />
      <circle cx="11" cy="9" r="4.5" fill="#222" />
      <path d="M9 7l4 4M13 7l-4 4" stroke="#fff" />
    </svg>
    <div className="mr-[9px] flex flex-col items-end text-[11.5px] leading-[16px]">
      <span>14:21</span>
      <span>18-10-2024</span>
    </div>
    <svg viewBox="0 0 14 15" className="mr-[21px] h-[15px] w-[14px]">
      <path d="M7 0c3 0 5 2 5 5v4l2 3H0l2-3V5c0-3 2-5 5-5z" fill="#0a3c94" />
      <path d="M5 13h4a2 2 0 0 1-4 0z" fill="#0a3c94" />
    </svg>
  </div>
);

export default function App() {
  return (
    <div className="relative flex h-[768px] w-[1366px] flex-col overflow-hidden bg-white">
      <div className="flex h-[720px] shrink-0 flex-col">
        <BrowserChrome />
        <div className="flex">
          <Sidebar />
          <PageRight />
        </div>
      </div>
      <Taskbar />
      <ExcelWindow />
      <div className="absolute left-[1304px] top-[610px] z-0 flex h-[30px] w-[23px] items-center rounded-r-[3px] bg-[#e05c3f] pl-[3px] text-[11px] font-bold text-[#f5cfc6]">↑</div>
      <div className="absolute left-[1295px] top-[649px] z-0 flex h-[38px] w-[38px] items-center justify-center rounded-full bg-[#2796d3] text-[#cfe9f7]">
        <Settings size={17} />
      </div>
    </div>
  );
}
